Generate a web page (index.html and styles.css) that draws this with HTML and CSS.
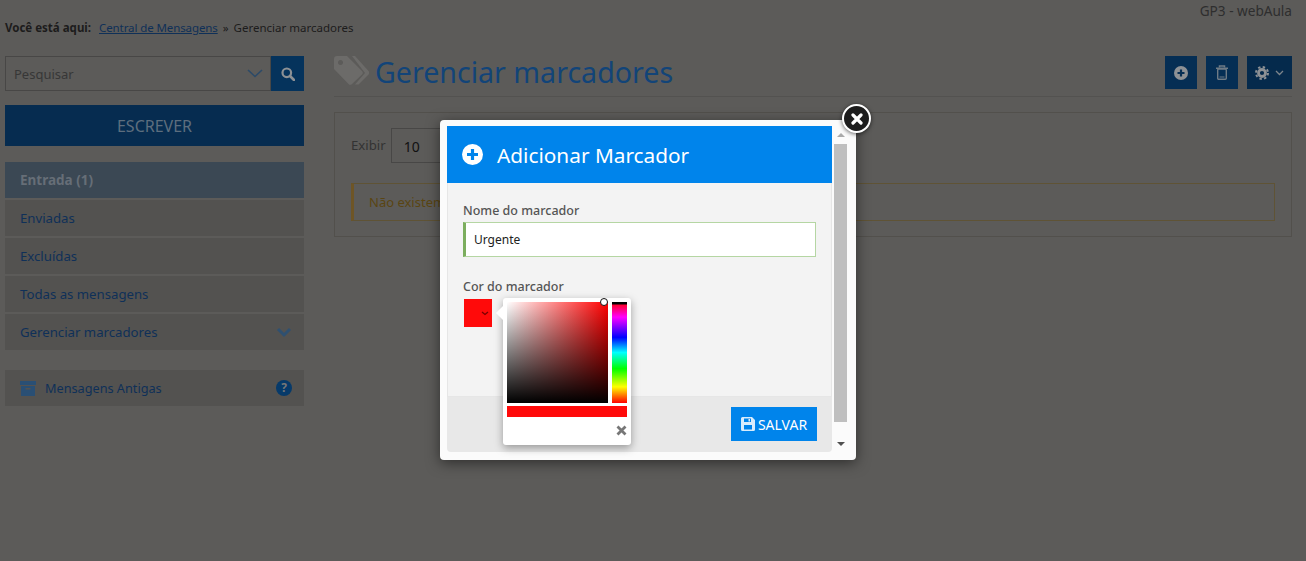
FILE: index.html
```html
<!DOCTYPE html>
<html lang="pt-BR">
<head>
    <meta charset="UTF-8">
    <title>Gerenciar marcadores</title>
    <link rel="stylesheet" href="styles.css">
</head>
<body>
    <div class="topline">GP3 - webAula</div>
    <div class="breadcrumb">
        <b>Você está aqui:</b>
        <a href="#">Central de Mensagens</a>
        <span class="sep">»</span>
        <span>Gerenciar marcadores</span>
    </div>

    <div class="page">
        <aside class="sidebar">
            <div class="search">
                <div class="search-input">
                    <span>Pesquisar</span>
                    <svg width="16" height="9" viewBox="0 0 16 9"><path d="M1 1l7 6.500L15 1" fill="none" stroke="#2c4a68" stroke-width="1.600"/></svg>
                </div>
                <div class="search-btn">
                    <svg width="14" height="14" viewBox="0 0 14 14"><circle cx="5.800" cy="5.800" r="4.300" fill="none" stroke="#8d9195" stroke-width="2.200"/><path d="M9 9l4 4" stroke="#8d9195" stroke-width="2.600" stroke-linecap="round"/></svg>
                </div>
            </div>
            <button class="write">ESCREVER</button>
            <ul class="menu">
                <li class="active">Entrada (1)</li>
                <li>Enviadas</li>
                <li>Excluídas</li>
                <li>Todas as mensagens</li>
                <li class="has-arrow">Gerenciar marcadores
                    <svg width="16" height="11" viewBox="0 0 16 11"><path d="M2 2l6 6 6-6" fill="none" stroke="#2f5070" stroke-width="3"/></svg>
                </li>
            </ul>
            <div class="old-messages">
                <svg width="16" height="15" viewBox="0 0 16 15"><rect y="0" width="16" height="4" fill="#2a4f74"/><path d="M1 5h14v10H1z" fill="#2a4f74"/><rect x="5.500" y="7" width="5" height="1.500" fill="#535250"/></svg>
                <span class="old-label">Mensagens Antigas</span>
                <span class="help">?</span>
            </div>
        </aside>

        <main class="content">
            <header class="title-bar">
                <svg class="tags" width="35" height="29" viewBox="0 0 35 29">
                    <path d="M0 3a3 3 0 0 1 3-3h10l15 15a2.500 2.500 0 0 1 0 3.500L18 28a2.500 2.500 0 0 1-3.500 0L0 13zM6.500 4a2.500 2.500 0 1 0 .01 0z" fill="#6c6b69" fill-rule="evenodd"/>
                    <path d="M18 0h3l13.500 15a2.800 2.800 0 0 1 0 3.500L24.500 28.500h-3.500L31 17z" fill="#6c6b69"/>
                </svg>
                <h1>Gerenciar marcadores</h1>
                <div class="actions">
                    <button class="action">
                        <svg width="14" height="14" viewBox="0 0 14 14"><circle cx="7" cy="7" r="7" fill="#8d9195"/><path d="M7 3.500v7M3.500 7h7" stroke="#052e54" stroke-width="2.200"/></svg>
                    </button>
                    <button class="action">
                        <svg width="12" height="15" viewBox="0 0 12 15"><path d="M3.500 2.500V1h5v1.500" fill="none" stroke="#6f7b85" stroke-width="1.500"/><path d="M0 2.500h12V4H0z" fill="#6f7b85"/><rect x="1.700" y="4" width="8.600" height="10.300" rx="1" fill="none" stroke="#6f7b85" stroke-width="1.400"/><path d="M3.500 12h5" stroke="#6f7b85"/></svg>
                    </button>
                    <button class="action wide">
                        <svg width="14" height="14" viewBox="0 0 14 14"><circle cx="7" cy="7" r="3.500" fill="none" stroke="#8d9195" stroke-width="2.800"/><circle cx="7" cy="7" r="6" fill="none" stroke="#8d9195" stroke-width="2" stroke-dasharray="2.400 2.310"/></svg>
                        <svg width="9" height="6" viewBox="0 0 9 6"><path d="M1 1l3.500 3.500L8 1" fill="none" stroke="#7c848b" stroke-width="1.300"/></svg>
                    </button>
                </div>
            </header>
            <section class="panel">
                <div class="show-row">
                    <label>Exibir</label>
                    <div class="select">10</div>
                </div>
                <div class="alert">Não existem</div>
            </section>
        </main>
    </div>

    <div class="modal">
        <div class="modal-inner">
            <div class="modal-head">
                <svg width="21" height="21" viewBox="0 0 21 21"><circle cx="10.500" cy="10.500" r="10.500" fill="#fff"/><path d="M10.500 5v11M5 10.500h11" stroke="#0084eb" stroke-width="3.200"/></svg>
                <h2>Adicionar Marcador</h2>
            </div>
            <div class="modal-body">
                <label class="field-label">Nome do marcador</label>
                <div class="text-input">Urgente</div>
                <label class="field-label color-label">Cor do marcador</label>
                <div class="swatch">
                    <svg width="8" height="5" viewBox="0 0 8 5"><path d="M1 1l3 2.500L7 1" fill="none" stroke="#7a0000" stroke-width="1.300"/></svg>
                </div>
            </div>
            <div class="modal-foot">
                <button class="save">
                    <svg width="14" height="14" viewBox="0 0 14 14"><path d="M0 1.500A1.500 1.500 0 0 1 1.500 0H11l3 3v9.500a1.500 1.500 0 0 1-1.500 1.500h-11A1.500 1.500 0 0 1 0 12.500z" fill="#d8ecfc"/><path d="M3 1.500h7v3.500H3zM3 8h8v4.500H3z" fill="#0084eb"/><path d="M7.500 2h1.500v2.500H7.500z" fill="#d8ecfc"/></svg>
                    SALVAR
                </button>
            </div>
        </div>
        <div class="scrollbar">
            <span class="arrow up"></span>
            <span class="thumb"></span>
            <span class="arrow down"></span>
        </div>
        <button class="close">
            <svg width="12" height="12" viewBox="0 0 12 12"><path d="M2 2l8 8M10 2l-8 8" stroke="#fff" stroke-width="3.200" stroke-linecap="round"/></svg>
        </button>

        <div class="picker">
            <div class="picker-main">
                <div class="sat"><span class="dot"></span></div>
                <div class="hue"></div>
            </div>
            <div class="current"></div>
            <div class="picker-foot">
                <svg width="11" height="11" viewBox="0 0 11 11"><path d="M1.500 1.500l8 8M9.500 1.500l-8 8" stroke="#777" stroke-width="2.800"/></svg>
            </div>
        </div>
    </div>
</body>
</html>
```

FILE: styles.css
```css
* {
    box-sizing: border-box;
}

html, body {
    height: 100%;
}

/* page colours are the dimmed ones, the modal sits on top of them */
body {
    margin: 0;
    overflow: hidden;
    background: #5c5b59;
    font-family: "Noto Sans", sans-serif;
    font-size: 13px;
    color: #222;
}

button {
    font-family: inherit;
    border: none;
    cursor: pointer;
}

.topline {
    height: 21px;
    padding-right: 14px;
    text-align: right;
    line-height: 21px;
    font-size: 13.600px;
    color: #2e2e2e;
}

.breadcrumb {
    height: 14px;
    padding-left: 5px;
    line-height: 14px;
    font-size: 11.500px;
    color: #1c1c1c;
}

.breadcrumb b {
    margin-right: 5px;
}

.breadcrumb a {
    color: #0f3058;
    letter-spacing: -0.1px;
}

.sep {
    margin: 0 2px;
}

.page {
    display: flex;
    gap: 30px;
    padding: 21px 14px 0 5px;
}

.sidebar {
    width: 299px;
    flex: none;
}

.search {
    display: flex;
    height: 35px;
}

.search-input {
    flex: 1;
    display: flex;
    align-items: center;
    justify-content: space-between;
    padding: 0 7px 0 8px;
    border: 1px solid #484746;
    color: #373737;
}

.search-btn {
    width: 33px;
    display: flex;
    align-items: center;
    justify-content: center;
    background: #05335c;
}

.write {
    display: block;
    width: 100%;
    height: 41px;
    margin-top: 14px;
    background: #062c50;
    color: #5d6e7e;
    font-size: 16px;
}

.menu {
    list-style: none;
    margin: 16px 0 0;
    padding: 0;
}

.menu li {
    height: 36px;
    margin-bottom: 2px;
    padding-left: 15px;
    line-height: 36px;
    font-size: 13.200px;
    background: #535250;
    color: #0f3058;
}

.menu li.active {
    background: #3b4854;
    color: #666e77;
    font-size: 13.500px;
    font-weight: bold;
}

.menu li.has-arrow {
    display: flex;
    align-items: center;
    justify-content: space-between;
    padding-right: 12px;
}

.old-messages {
    display: flex;
    align-items: center;
    height: 36px;
    margin-top: 20px;
    padding: 0 12px 0 15px;
    background: #535250;
    color: #0f3058;
}

.old-label {
    flex: 1;
    margin-left: 9px;
    font-size: 12.700px;
}

.help {
    width: 16px;
    height: 16px;
    border-radius: 50%;
    background: #063a6a;
    color: #777;
    text-align: center;
    line-height: 16px;
    font-size: 12px;
    font-weight: bold;
}

.content {
    flex: 1;
}

.title-bar {
    display: flex;
    align-items: center;
    height: 41px;
    padding-bottom: 8px;
    border-bottom: 1px solid #535250;
}

.tags {
    margin-top: -3px;
}

h1 {
    flex: 1;
    margin: -2px 0 0 6px;
    font-size: 28.600px;
    font-weight: normal;
    line-height: 33px;
    color: #124478;
}

.actions {
    display: flex;
    gap: 9px;
    margin-top: 1px;
}

.action {
    display: flex;
    align-items: center;
    justify-content: center;
    gap: 6px;
    width: 32px;
    height: 33px;
    padding: 0;
    background: #052e54;
}

.action.wide {
    width: 45px;
    background: #052a4c;
}

.panel {
    height: 125px;
    margin-top: 15px;
    padding: 15px 16px;
    border: 1px solid #52504c;
}

.show-row {
    display: flex;
    align-items: center;
    height: 35px;
    gap: 5px;
    font-size: 13.200px;
    color: #333;
}

.show-row label {
    margin-top: -2px;
}

.select {
    width: 120px;
    height: 35px;
    padding-left: 12px;
    line-height: 35px;
    border: 1px solid #484746;
    color: #111;
    font-size: 14px;
}

.alert {
    height: 38px;
    margin-top: 20px;
    padding-left: 15px;
    line-height: 36px;
    border: 1px solid #5f5335;
    border-left: 3px solid #6e5526;
    color: #5a4512;
}

.modal {
    position: absolute;
    left: 440px;
    top: 120px;
    width: 416px;
    height: 340px;
    padding: 6px 24px 8px 7px;
    background: #fbfbfb;
    border-radius: 4px;
    box-shadow: 0 3px 14px rgba(0, 0, 0, 0.5);
}

.modal-inner {
    height: 100%;
    display: flex;
    flex-direction: column;
}

.modal-head {
    display: flex;
    align-items: center;
    gap: 14px;
    height: 57px;
    padding-left: 15px;
    background: #0084eb;
    color: #fff;
}

.modal-head h2 {
    margin: 0;
    font-size: 20.800px;
    font-weight: normal;
}

.modal-body {
    flex: 1;
    padding: 20px 15px 0;
    background: #f3f3f3;
    border: 1px solid #e6e6e6;
    border-top: none;
}

.field-label {
    display: block;
    height: 19px;
    line-height: 15px;
    font-size: 12.500px;
    font-weight: 500;
    color: #555;
}

.text-input {
    height: 35px;
    padding-left: 8px;
    line-height: 33px;
    background: #fff;
    border: 1px solid #b5d6a3;
    border-left: 3px solid #7cae5e;
    color: #222;
    font-size: 12px;
}

.color-label {
    height: 20px;
    margin-top: 22px;
}

.swatch {
    display: flex;
    align-items: center;
    justify-content: flex-end;
    width: 28px;
    height: 28px;
    margin-left: 1px;
    padding-right: 3px;
    background: #ff0a0a;
}

.modal-foot {
    display: flex;
    align-items: flex-start;
    justify-content: flex-end;
    height: 55px;
    padding: 10px 15px 0 0;
    background: #e8e8e8;
    border-radius: 0 0 4px 4px;
}

.save {
    display: flex;
    align-items: center;
    justify-content: center;
    gap: 3px;
    width: 86px;
    height: 34px;
    padding: 0;
    background: #0084eb;
    color: #fff;
    font-size: 14px;
}

.scrollbar {
    position: absolute;
    top: 6px;
    right: 8px;
    bottom: 8px;
    width: 15px;
    display: flex;
    flex-direction: column;
    align-items: center;
}

.thumb {
    flex: 1;
    width: 13px;
    margin: 18px 0 30px;
    background: #bfbfbf;
}

.arrow {
    position: absolute;
    width: 0;
    height: 0;
    border-left: 4px solid transparent;
    border-right: 4px solid transparent;
}

.arrow.up {
    top: 7px;
    border-bottom: 4px solid #aaa;
}

.arrow.down {
    bottom: 6px;
    border-top: 4px solid #505050;
}

.close {
    position: absolute;
    top: -16px;
    right: -15px;
    width: 29px;
    height: 29px;
    display: flex;
    align-items: center;
    justify-content: center;
    padding: 0;
    border: 2px solid #fff;
    border-radius: 50%;
    background: #1c1c1c;
    box-shadow: 0 1px 4px rgba(0, 0, 0, 0.6);
}

.picker {
    position: absolute;
    left: 63px;
    top: 178px;
    width: 128px;
    height: 147px;
    padding: 4px;
    background: #fff;
    border-radius: 3px;
    box-shadow: 0 3px 8px rgba(0, 0, 0, 0.35);
}

.picker::before {
    content: "";
    position: absolute;
    left: -5px;
    top: 10px;
    width: 10px;
    height: 10px;
    background: #fff;
    transform: rotate(45deg);
}

.picker-main {
    position: relative;
    display: flex;
    gap: 4px;
    height: 101px;
}

.sat {
    position: relative;
    width: 101px;
    background:
        linear-gradient(to bottom, rgba(0, 0, 0, 0), #000),
        linear-gradient(to right, #fff, #f00);
}

.dot {
    position: absolute;
    top: -4px;
    right: 0;
    width: 8px;
    height: 8px;
    border: 1.500px solid #111;
    border-radius: 50%;
    background: #fff;
}

.hue {
    width: 15px;
    background: linear-gradient(to bottom, #000 0, #000 2px, #f03 3px, #f0f 15%, #00f 35%, #0ff 50%, #0f0 66%, #ff0 84%, #f00 100%);
}

.current {
    height: 11px;
    margin-top: 3px;
    background: #ff0a0a;
}

.picker-foot {
    display: flex;
    justify-content: flex-end;
    padding: 8px 0 0;
}
```
